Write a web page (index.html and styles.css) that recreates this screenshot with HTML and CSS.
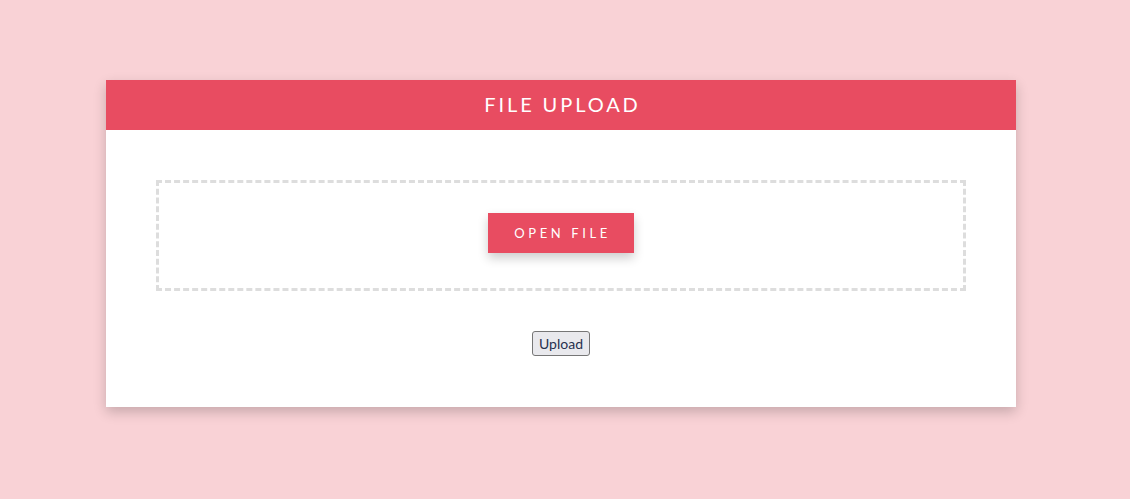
FILE: index.html
```html
<!DOCTYPE html>
<html>
<head>
<meta charset="utf-8">
<link rel="stylesheet" href="styles.css">
</head>
<body>
<div class="card">
  <div class="card-header">FILE UPLOAD</div>
  <div class="card-body">
    <div class="drop-zone">
      <label class="open-btn">OPEN FILE</label>
    </div>
    <div class="actions">
      <button class="upload-btn">Upload</button>
    </div>
  </div>
</div>
</body>
</html>
```
FILE: styles.css
```css
html, body {
  margin: 0;
  padding: 0;
}
body {
  background: #f9d2d6;
  font-family: "Lato", "Open Sans", sans-serif;
  color: #2b3350;
  min-height: 499px;
}
.card {
  width: 910px;
  margin: 80px 0 0 106px;
  background: #fff;
  box-shadow: 0 5px 12px rgba(0, 0, 0, 0.2);
}
.card-header {
  height: 50px;
  box-sizing: border-box;
  padding: 0 0 3px 3px;
  background: #e84c61;
  color: #fff;
  display: flex;
  align-items: center;
  justify-content: center;
  font-size: 20px;
  letter-spacing: 2.9px;
}
.card-body {
  padding: 50px 50px 51px;
}
.drop-zone {
  border: 3px dashed #dddddd;
  padding: 30px 0 35px;
  display: flex;
  justify-content: center;
}
.open-btn {
  width: 146px;
  height: 40px;
  box-sizing: border-box;
  padding: 0 0 1px 3px;
  background: #e84c61;
  color: #fff;
  font-size: 13px;
  letter-spacing: 3.6px;
  display: flex;
  align-items: center;
  justify-content: center;
  box-shadow: 0 5px 10px rgba(0, 0, 0, 0.2);
}
.actions {
  display: flex;
  justify-content: center;
  margin-top: 40px;
}
.upload-btn {
  height: 25px;
  padding: 0 6px;
  font-family: inherit;
  font-size: 14px;
  color: #27314f;
  background: #e9e9ed;
  border: 1px solid #767676;
  border-radius: 3px;
}
```
